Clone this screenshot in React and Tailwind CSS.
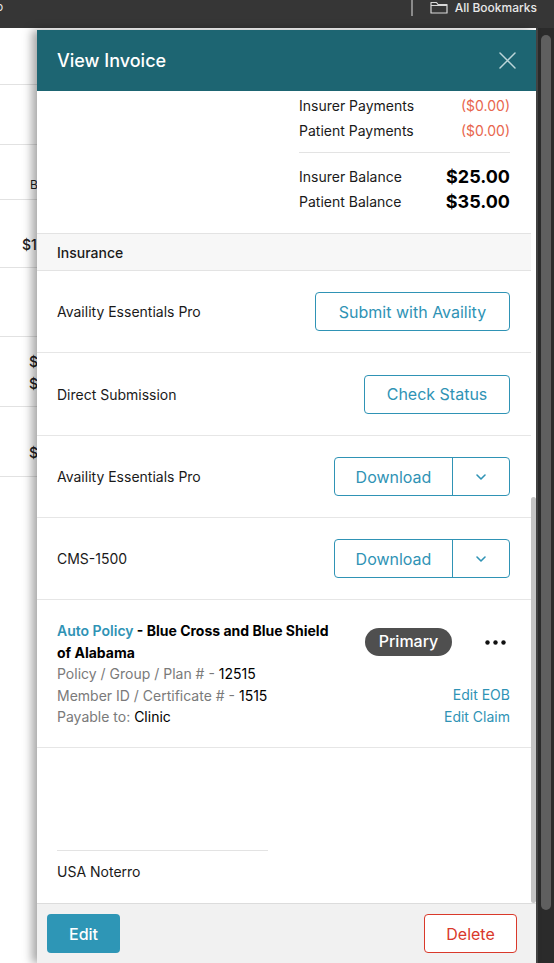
import React from 'react';

const accent = 'text-[#2f93b5]';

const Chevron = () => (
  <svg width="12" height="8" viewBox="0 0 12 8" fill="none">
    <path d="M2 2l4 4 4-4" stroke="#2f93b5" strokeWidth="1.6" strokeLinecap="round" strokeLinejoin="round" />
  </svg>
);

const SplitDownload = () => (
  <div className="flex h-[39px] w-[176px] rounded-[4px] border border-[#2f93b5] bg-white">
    <button className={`flex-1 border-r border-[#2f93b5] text-[16px] ${accent}`}>Download</button>
    <button className="flex w-[56px] items-center justify-center">
      <Chevron />
    </button>
  </div>
);

const InsuranceRow = ({ label, h = 'h-[82px]', children }) => (
  <div className={`flex items-center justify-between border-b border-[#e6e6e6] pl-5 pr-[21px] ${h}`}>
    <span className="text-[14px] text-[#1a1a1a]">{label}</span>
    {children}
  </div>
);

const BgRow = ({ h, children }) => (
  <div className={`border-b border-[#e2e2e2] ${h}`}>{children}</div>
);

export default function App() {
  return (
    <div className="flex h-[963px] w-[554px] flex-col overflow-hidden bg-white font-['Inter','Noto_Sans',sans-serif]">
      {/* browser bookmarks bar */}
      <div className="flex h-[28px] shrink-0 items-start bg-[#363636] text-[12px] text-[#e8e8e8]">
        <span className="-ml-[4px] leading-[14px]">o</span>
        <div className="ml-auto h-[16px] w-[2px] bg-[#8a8a8a]" />
        <div className="ml-[17px] flex h-[15px] items-center gap-[7px] pr-[17px]">
          <svg width="18" height="13" viewBox="0 0 18 13" fill="none">
            <path d="M1 1.5h5.5l1.5 2h9v8.5H1z" stroke="#d8d8d8" strokeWidth="1.2" strokeLinejoin="round" />
            <path d="M1 4.5h16" stroke="#d8d8d8" strokeWidth="1" />
          </svg>
          <span className="font-medium">All Bookmarks</span>
        </div>
      </div>

      <div className="flex min-h-0 flex-1">
        {/* page behind the drawer */}
        <div className="w-[37px] shrink-0 overflow-hidden">
          <div className="w-[40px] text-[13px] text-[#222]">
            <BgRow h="h-[57px]" />
            <BgRow h="h-[60px]" />
            <BgRow h="h-[55px]">
              <div className="pl-[30px] pt-[33px] text-[12px] leading-[14px]">B</div>
            </BgRow>
            <BgRow h="h-[68px]">
              <div className="pl-[22px] pt-[35px] text-[14px] font-medium leading-[20px]">$1</div>
            </BgRow>
            <BgRow h="h-[69px]" />
            <BgRow h="h-[70px]">
              <div className="pl-[29px] pt-[14px] text-[14px] font-medium leading-[22px]">
                <div>$</div>
                <div>$</div>
              </div>
            </BgRow>
            <BgRow h="h-[70px]">
              <div className="pl-[29px] pt-[36px] text-[14px] font-medium leading-[20px]">$</div>
            </BgRow>
          </div>
        </div>

        {/* drawer */}
        <div className="relative z-10 mt-[2px] flex w-[499px] shrink-0 flex-col bg-white shadow-[-5px_0_9px_rgba(0,0,0,0.35)]">
          <div className="flex h-[61px] shrink-0 items-center justify-between bg-[#1d6572] pl-5 pr-[20px]">
            <h1 className="text-[18px] font-medium text-white">View Invoice</h1>
            <svg width="17" height="17" viewBox="0 0 17 17" fill="none">
              <path d="M1 1l15 15M16 1L1 16" stroke="#bcd5d9" strokeWidth="1.5" strokeLinecap="round" />
            </svg>
          </div>

          <div className="flex min-h-0 flex-1">
            <div className="flex-1">
              {/* totals */}
              <div className="flex justify-end pb-[19px] pl-5 pr-[21px] pt-[2px] text-[14px] text-[#1a1a1a]">
                <div className="w-[211px]">
                  <div className="flex h-[25px] items-center justify-between">
                    <span>Insurer Payments</span>
                    <span className="text-[#e8664d]">($0.00)</span>
                  </div>
                  <div className="flex h-[25px] items-center justify-between">
                    <span>Patient Payments</span>
                    <span className="text-[#e8664d]">($0.00)</span>
                  </div>
                  <div className="mt-[9px] border-t border-[#e3e3e3] pt-[11px]">
                    <div className="flex h-[25px] items-center justify-between">
                      <span>Insurer Balance</span>
                      <span className="text-[18px] font-bold text-black">$25.00</span>
                    </div>
                    <div className="flex h-[25px] items-center justify-between">
                      <span>Patient Balance</span>
                      <span className="text-[18px] font-bold text-black">$35.00</span>
                    </div>
                  </div>
                </div>
              </div>

              <div className="flex h-[38px] items-center border-y border-[#e3e3e3] bg-[#f7f7f7] pl-5 text-[14px] font-medium text-[#1a1a1a]">
                Insurance
              </div>

              <InsuranceRow label="Availity Essentials Pro">
                <button className={`h-[39px] w-[195px] rounded-[4px] border border-[#2f93b5] text-[16px] ${accent}`}>
                  Submit with Availity
                </button>
              </InsuranceRow>
              <InsuranceRow label="Direct Submission" h="h-[83px]">
                <button className={`h-[39px] w-[146px] rounded-[4px] border border-[#2f93b5] text-[16px] ${accent}`}>
                  Check Status
                </button>
              </InsuranceRow>
              <InsuranceRow label="Availity Essentials Pro">
                <SplitDownload />
              </InsuranceRow>
              <InsuranceRow label="CMS-1500">
                <SplitDownload />
              </InsuranceRow>

              {/* policy */}
              <div className="flex justify-between border-b border-[#e6e6e6] pb-[19px] pl-5 pr-[21px] pt-5 text-[14px] leading-[21.5px]">
                <p className="w-[285px] font-bold text-black">
                  <span className={`font-semibold ${accent}`}>Auto Policy</span> - Blue Cross and Blue Shield of Alabama
                  <span className="block font-normal text-[#7a7a7a]">
                    Policy / Group / Plan # - <span className="text-black">12515</span>
                  </span>
                  <span className="block font-normal text-[#7a7a7a]">
                    Member ID / Certificate # - <span className="text-black">1515</span>
                  </span>
                  <span className="block font-normal text-[#7a7a7a]">
                    Payable to: <span className="text-black">Clinic</span>
                  </span>
                </p>
                <div className="flex flex-col items-end">
                  <div className="mt-[8px] flex items-center gap-[33px]">
                    <span className="flex h-[28px] w-[87px] items-center justify-center rounded-full bg-[#4f4f4f] text-[16px] font-medium text-white">
                      Primary
                    </span>
                    <svg width="21" height="5" viewBox="0 0 21 5" className="mr-[4px]">
                      <circle cx="2.5" cy="2.5" r="2.2" fill="#111" />
                      <circle cx="10.5" cy="2.5" r="2.2" fill="#111" />
                      <circle cx="18.5" cy="2.5" r="2.2" fill="#111" />
                    </svg>
                  </div>
                  <div className={`mt-[28px] ${accent}`}>Edit EOB</div>
                  <div className={accent}>Edit Claim</div>
                </div>
              </div>

              <div className="h-[102px]" />
              <div className="ml-5 w-[211px] border-t border-[#e3e3e3] pt-[11px] text-[14px] leading-[20px] text-[#1a1a1a]">
                USA Noterro
              </div>
            </div>
            {/* inner scrollbar */}
            <div className="flex w-[5px] flex-col">
              <div className="h-[406px]" />
              <div className="flex-1 rounded-full bg-[#c4c4c4]" />
            </div>
          </div>

          <div className="flex h-[60px] shrink-0 items-center justify-between border-t border-[#dcdcdc] bg-[#f1f1f1] pl-[10px] pr-[19px]">
            <button className="h-[39px] w-[73px] rounded-[4px] bg-[#2e96b6] text-[16px] font-medium text-white">Edit</button>
            <button className="h-[39px] w-[93px] rounded-[4px] border border-[#d9392b] bg-white text-[16px] text-[#d9392b]">Delete</button>
          </div>
        </div>

        {/* browser scrollbar */}
        <div className="flex w-[18px] shrink-0 border-l-2 border-[#454545] bg-[#2b2b2b] px-[3px] pb-[53px] pt-[7px]">
          <div className="w-full rounded-full bg-[#5f5f5f]" />
        </div>
      </div>
    </div>
  );
}
